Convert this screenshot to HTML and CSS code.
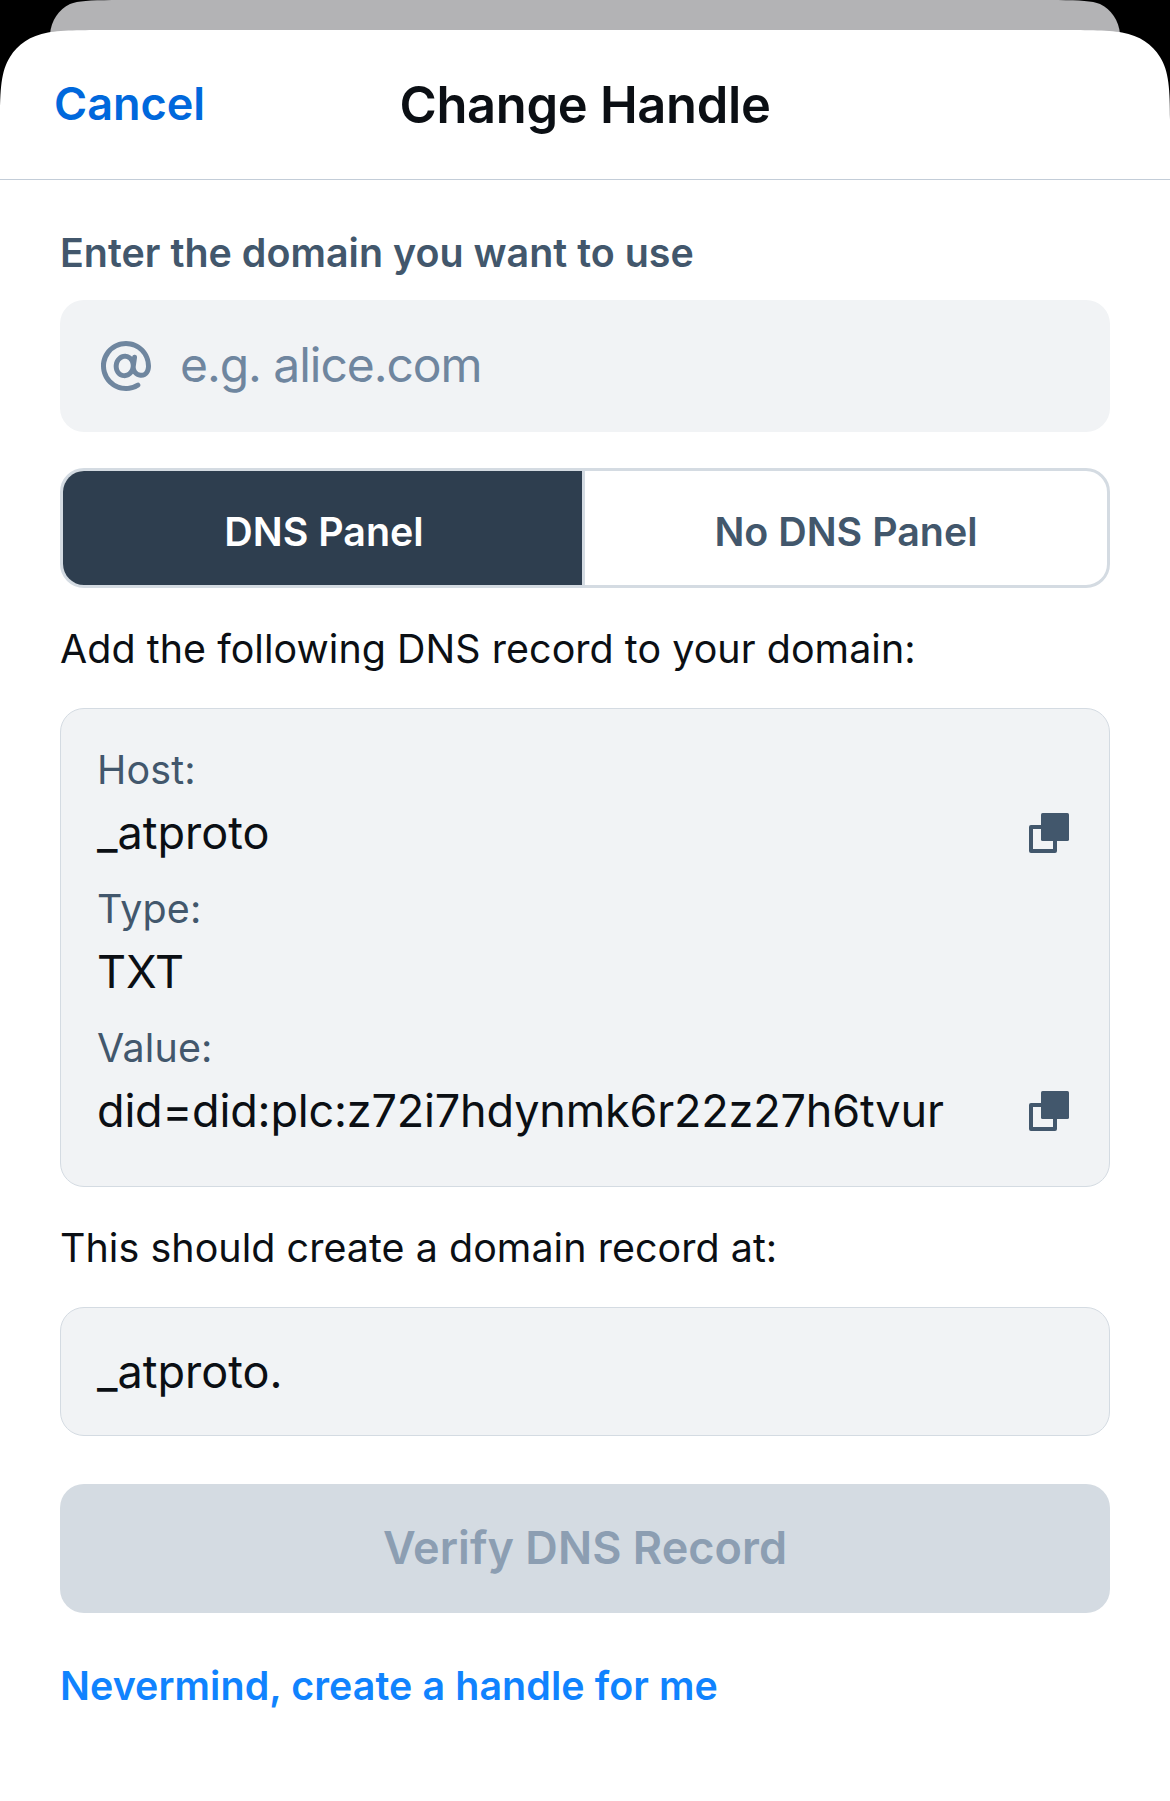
FILE: index.html
```html
<!DOCTYPE html>
<html lang="en">
<head>
    <meta charset="UTF-8">
    <meta name="viewport" content="width=device-width, initial-scale=1.0">
    <title>Change Handle</title>
    <link rel="stylesheet" href="styles.css">
</head>
<body>
    <!-- Rounded top of the sheet, with the previous screen behind it -->
    <svg class="backdrop" width="1170" height="120" viewBox="0 0 1170 120">
        <rect width="1170" height="120" fill="#000"/>
        <path fill="#b3b3b5" d="M50 34C51 21 59 9 70 4C78 .8 90 .4 112 0H1058C1080 .4 1092 .8 1100 4C1111 9 1119 21 1120 34Z"/>
        <path fill="#fff" d="M0 120C0 90 1 71 10 57C18 44 30 36 48 32.5C62 30 90 30 110 30H1060C1080 30 1108 30 1122 32.5C1140 36 1152 44 1160 57C1169 71 1170 90 1170 120Z"/>
    </svg>

    <header class="header">
        <a class="cancel" href="#">Cancel</a>
        <h1 class="title">Change Handle</h1>
    </header>

    <main class="content">
        <label class="label" for="domain">Enter the domain you want to use</label>
        <div class="field">
            <svg class="at-icon" viewBox="0 0 24 24">
                <path fill="currentColor" fill-rule="evenodd" d="M12 4a8 8 0 1 0 4.21 14.804 1 1 0 0 1 1.054 1.7A9.958 9.958 0 0 1 12 22C6.477 22 2 17.523 2 12S6.477 2 12 2s10 4.477 10 10c0 1.104-.27 2.31-.949 3.243-.716.984-1.849 1.6-3.331 1.465a4.207 4.207 0 0 1-2.93-1.585c-.94 1.21-2.388 1.94-3.985 1.715-2.53-.356-4.04-2.91-3.682-5.458.358-2.547 2.514-4.586 5.044-4.23.905.127 1.68.536 2.286 1.126a1 1 0 0 1 1.964.368l-.515 3.545v.002a2.222 2.222 0 0 0 1.999 2.526c.75.068 1.212-.21 1.533-.65.358-.493.566-1.245.566-2.067a8 8 0 0 0-8-8Zm-.112 5.13c-1.195-.168-2.544.819-2.784 2.529-.24 1.71.784 3.03 1.98 3.198 1.195.168 2.543-.819 2.784-2.529.24-1.71-.784-3.03-1.98-3.198Z"/>
            </svg>
            <input type="text" id="domain" placeholder="e.g. alice.com">
        </div>

        <div class="toggle">
            <button class="tab active">DNS Panel</button>
            <button class="tab">No DNS Panel</button>
        </div>

        <p class="text">Add the following DNS record to your domain:</p>
        <div class="box record">
            <div class="name">Host:</div>
            <div class="value">
                <span>_atproto</span>
                <svg class="copy-icon" viewBox="0 0 24 24">
                    <rect x="3" y="9" width="12" height="12" fill="none" stroke="currentColor" stroke-width="2" stroke-linejoin="round"/>
                    <rect x="8" y="2" width="14" height="14" rx="0.8" fill="currentColor"/>
                </svg>
            </div>
            <div class="name">Type:</div>
            <div class="value">
                <span>TXT</span>
            </div>
            <div class="name">Value:</div>
            <div class="value">
                <span class="did">did=did:plc:z72i7hdynmk6r22z27h6tvur</span>
                <svg class="copy-icon" viewBox="0 0 24 24">
                    <rect x="3" y="9" width="12" height="12" fill="none" stroke="currentColor" stroke-width="2" stroke-linejoin="round"/>
                    <rect x="8" y="2" width="14" height="14" rx="0.8" fill="currentColor"/>
                </svg>
            </div>
        </div>

        <p class="text">This should create a domain record at:</p>
        <div class="box result">_atproto.</div>

        <button class="verify" disabled>Verify DNS Record</button>
        <a class="link" href="#">Nevermind, create a handle for me</a>
    </main>
</body>
</html>
```

FILE: styles.css
```css
* {
    box-sizing: border-box;
}

body {
    margin: 0;
    padding-top: 30px;
    min-height: 1801px;
    background-color: #fff;
    color: #0b0f14;
    font-family: Inter, sans-serif;
    font-size: 45px;
}

a {
    text-decoration: none;
}

button,
input {
    margin: 0;
    padding: 0;
    border: none;
    background: none;
    font-family: inherit;
}

.backdrop {
    position: absolute;
    top: 0;
    left: 0;
    z-index: -1;
}

.header {
    display: grid;
    grid-template-columns: 1fr auto 1fr;
    align-items: center;
    height: 150px;
    padding: 0 54px;
    border-bottom: 1px solid #c3cdd8;
}

.cancel {
    padding-bottom: 3px;
    color: #0068dc;
    font-weight: 600;
}

.title {
    margin: 0;
    font-size: 50.6px;
    font-weight: 600;
    letter-spacing: -0.3px;
}

.content {
    display: flex;
    flex-direction: column;
    padding: 48px 60px 0;
}

.label,
.text,
.name,
.link {
    margin: 0;
    font-size: 39.4px;
    line-height: 51px;
}

.label {
    color: #42576c;
    font-weight: 600;
    letter-spacing: 0.02px;
}

.text {
    letter-spacing: 0.06px;
}

.field {
    display: flex;
    align-items: center;
    gap: 24px;
    height: 132px;
    margin-top: 21px;
    padding: 0 36px;
    border-radius: 24px;
    background-color: #f1f3f5;
    color: #6f869f;
}

.at-icon {
    width: 60px;
    height: 60px;
}

.field input {
    flex: 1;
    padding-bottom: 3px;
    font-size: 48px;
    line-height: 58px;
    letter-spacing: -1.05px;
}

.field input::placeholder {
    color: #6f869f;
}

.toggle {
    display: flex;
    height: 120px;
    margin: 36px 0;
    border: 3px solid #d4dbe2;
    border-radius: 24px;
    overflow: hidden;
}

.tab {
    flex: 1;
    padding-top: 7px;
    color: #42576c;
    font-size: 39.4px;
    font-weight: 600;
}

.tab.active {
    flex: 0 0 522px;
    padding-left: 3px;
    border-right: 3px solid #d4dbe2;
    background-color: #2e3e4f;
    color: #fff;
}

.box {
    margin: 33px 0 36px;
    border: 1px solid #d4dbe2;
    border-radius: 24px;
    background-color: #f1f3f5;
}

.record {
    padding: 36px 36px 24px;
}

.name {
    color: #42576c;
    letter-spacing: 0.2px;
}

.value {
    display: flex;
    align-items: center;
    justify-content: space-between;
    height: 74px;
    margin-bottom: 14px;
}

.value span {
    padding-bottom: 2px;
}

.value .did {
    letter-spacing: -0.17px;
}

.copy-icon {
    width: 48px;
    height: 48px;
    color: #42576c;
}

.result {
    height: 129px;
    margin-bottom: 48px;
    padding: 0 36px;
    line-height: 127px;
}

.verify {
    height: 129px;
    margin-bottom: 48px;
    padding-bottom: 2px;
    border-radius: 24px;
    background-color: #d4dbe2;
    color: #8c9eb2;
    font-size: 45px;
    font-weight: 600;
    letter-spacing: 0.05px;
}

.link {
    color: #1083fe;
    font-weight: 600;
    letter-spacing: 0.08px;
}
```
